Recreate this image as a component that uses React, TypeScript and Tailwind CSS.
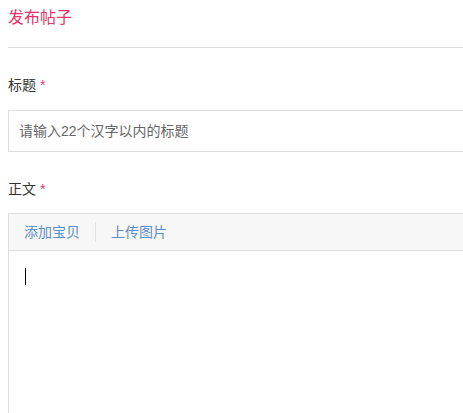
export default function App() {
    const font = { fontFamily: '"Liberation Sans", "Noto Sans CJK SC", sans-serif' };
    return (
        <div className="w-[463px] h-[413px] overflow-hidden bg-white" style={font}>
            <div className="w-[640px] pl-2">
                {/* Header */}
                <h1 className="mt-[6px] h-[24px] leading-[24px] text-[16px] text-[#e4356a]">发布帖子</h1>
                <div className="mt-[17px] h-px bg-[#dddddd]" />

                {/* Title field */}
                <div className="mt-[27px] h-[20px] leading-[20px] text-[14px] text-[#333333]">
                    标题 <span className="text-[#e4356a]">*</span>
                </div>
                <input
                    className="mt-[15px] block w-full h-[42px] border border-[#dddddd] px-[10px] text-[14px] text-[#333333] placeholder:text-[#666666] outline-none"
                    placeholder="请输入22个汉字以内的标题"
                />

                {/* Body field */}
                <div className="mt-[27px] h-[20px] leading-[20px] text-[14px] text-[#333333]">
                    正文 <span className="text-[#e4356a]">*</span>
                </div>
                <div className="mt-[14px] border border-[#dddddd] h-[300px]">
                    <div className="h-[37px] bg-[#f7f7f7] border-b border-[#dddddd] flex items-center pl-[15px] text-[14px] text-[#5a8fc6]">
                        <span>添加宝贝</span>
                        <span className="mx-[15px] w-px h-[20px] bg-[#e2e2e2]" />
                        <span>上传图片</span>
                    </div>
                    <div className="pt-[17px] pl-[16px]">
                        <div className="w-px h-[17px] bg-black" />
                    </div>
                </div>
            </div>
        </div>
    );
}
